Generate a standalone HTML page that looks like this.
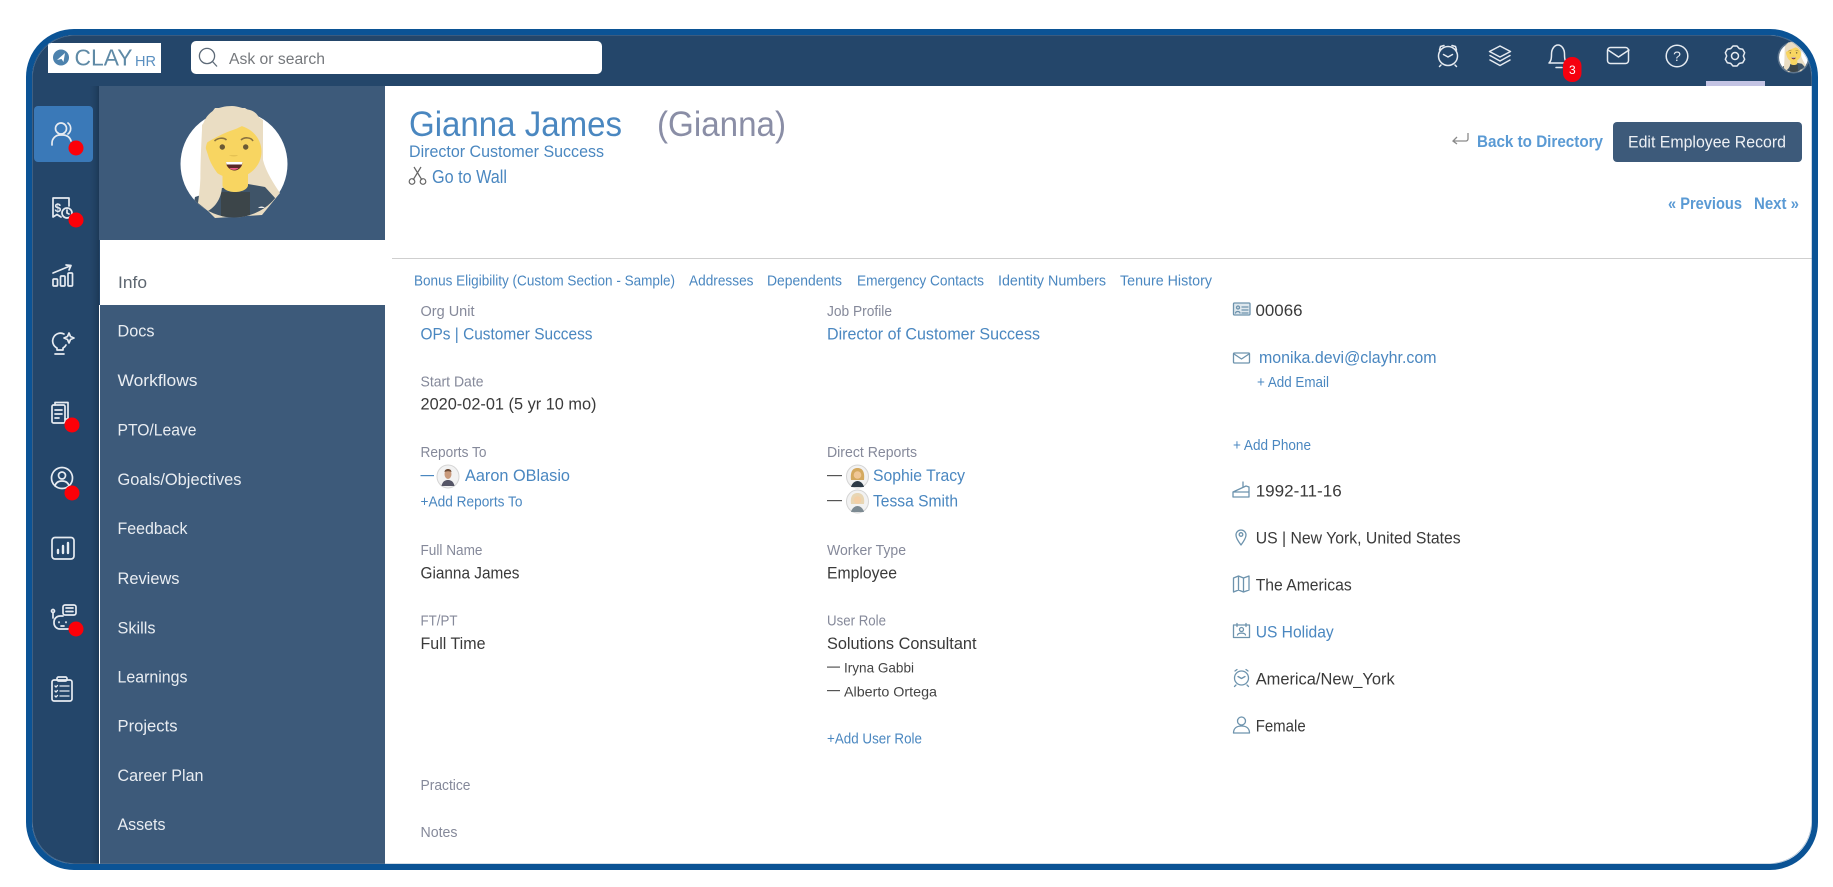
<!DOCTYPE html>
<html><head><meta charset="utf-8"><title>ClayHR</title>
<style>
html,body{margin:0;padding:0;background:#fff;width:1833px;height:887px;overflow:hidden}
svg{display:block}
text{font-family:"Liberation Sans",sans-serif}
.l{fill:#4a87c0}
.t{fill:#3a3a3a;font-size:17px}
.b{fill:#85899a;font-size:15px}
.n{fill:#e9edf2;font-size:16.5px}
.i{fill:none;stroke:#e6ebf1;stroke-width:1.7;stroke-linecap:round;stroke-linejoin:round}
.c{fill:none;stroke:#6d93ad;stroke-width:1.3;stroke-linecap:round;stroke-linejoin:round}
</style></head><body>
<svg width="1833" height="887" viewBox="0 0 1833 887" xmlns="http://www.w3.org/2000/svg" style="filter:blur(.35px)">
<defs>
<clipPath id="cl"><rect x="32" y="35" width="1780" height="829" rx="42"/></clipPath>
<clipPath id="av"><circle cx="234" cy="164" r="53.5"/></clipPath>
<linearGradient id="sh" x1="0" x2="1"><stop offset="0" stop-color="#24466a" stop-opacity="0"/><stop offset="1" stop-color="#1c3856"/></linearGradient>
<g id="ava">
<circle cx="234" cy="164" r="53.5" fill="#fff"/>
<path d="M202 130C204 112 218 106 232 106C238 106 244 109 250 110C258 112 263 122 263 135L263 160C266 172 274 184 280 193L262 215L215 218L202 205C199 190 201 150 202 130Z" fill="#eaddc3"/>
<g clip-path="url(#av)">
<path d="M190 225L195 197L222 188L248 184L265 187L276 199L290 225Z" fill="#3f5468"/>
<path d="M221 192H250V225H221Z" fill="#3c4549"/>
<path d="M258 208c2-2 5-2 7 0z" fill="#e9e9e9"/>
</g>
<path d="M222.500 170H248V185C248 189 242 192 235 192C228 192 222.500 189 222.500 185Z" fill="#f8d561"/>
<ellipse cx="233.500" cy="151.500" rx="28" ry="26.500" fill="#f8d561"/>
<path d="M202 146C210 140 222 134 230 131C236 129 241 127 245 124C252 130 260 138 263 146L263 120L245 108L215 108L202 125Z" fill="#eaddc3"/>
<path d="M203 140L208 155C212 170 222 175 222 185C222 195 218 205 208 211L198 203C201 185 201 160 203 140Z" fill="#eaddc3"/>
<path d="M214.500 141c3-3 9-4 12-1M241 140c3-3 10-3 12 1" fill="none" stroke="#8a7240" stroke-width="1.600"/>
<circle cx="222.300" cy="147" r="2.700" fill="#6b5a35"/><circle cx="245.700" cy="147" r="2.700" fill="#6b5a35"/>
<path d="M229 155h9c-1 2-7 2-9 0z" fill="#e5c253"/>
<path d="M226 162h16.500c0 5-4 8.500-8 8.500s-8.500-3.500-8.500-8.500z" fill="#5a2a26"/>
<path d="M226 162h16.500l-.5 2.500h-15.500z" fill="#fff"/><path d="M229.500 168h9c-2 2.500-7 2.500-9 0z" fill="#ef5e87"/>
</g>
</defs>
<rect width="1833" height="887" fill="#fff"/>
<g clip-path="url(#cl)">
<rect x="32" y="35" width="1780" height="829" fill="#fff"/>
<rect x="32" y="35" width="1780" height="51" fill="#24466a"/>
<rect x="32" y="35" width="68" height="829" fill="#24466a"/>
<rect x="88" y="86" width="11" height="778" fill="url(#sh)"/>
<rect x="99" y="86" width="286" height="154" fill="#3d5a7a"/>
<rect x="99" y="305" width="1" height="559" fill="#fff"/>
<rect x="100" y="305" width="285" height="559" fill="#3d5a7a"/>
<rect x="1706" y="81" width="59" height="5" fill="#c3c3e3"/>
</g>

<!-- logo -->
<rect x="48" y="43" width="113" height="30" fill="#fff"/>
<circle cx="61" cy="57.500" r="8" fill="#4d82ad"/>
<path d="M57 60l8-7-1.500 9-2-3z" fill="#fff"/>
<text x="74.500" y="65.500" font-size="23" fill="#5f8aa6" textLength="58" lengthAdjust="spacingAndGlyphs">CLAY</text>
<text x="135" y="66" font-size="15" fill="#5a8fc0" textLength="21" lengthAdjust="spacingAndGlyphs">HR</text>

<!-- search -->
<rect x="191" y="41" width="411" height="33" rx="5" fill="#fff"/>
<circle cx="207" cy="56" r="7.600" fill="none" stroke="#5d6a78" stroke-width="1.300"/>
<path d="M212.500 61.500l4.500 5" stroke="#5d6a78" stroke-width="1.300" fill="none"/>
<text x="229" y="64" font-size="15.500" fill="#75787c" textLength="96" lengthAdjust="spacingAndGlyphs">Ask or search</text>

<!-- top icons -->
<g class="i" style="stroke-width:1.500">
<circle cx="1448" cy="56" r="9.500"/><path d="M1443.500 54.500l4.500 2.500 4.500-2.500"/><path d="M1439.500 50l1-3.500 3.500-1M1456.500 50l-1-3.500-3.500-1M1441 65l-1.500 1.500M1455 65l1.500 1.500"/>
<path d="M1500 46l10.500 5.500-10.500 5.500-10.500-5.500z"/><path d="M1490 55.500l10 5.500 10-5.500M1490 60l10 5.500 10-5.500"/>
<path d="M1549 63c2-2 2.500-4 2.500-9 0-5 3-9 6.500-9s6.500 4 6.500 9c0 5 .5 7 2.500 9z"/><path d="M1556 67.500h6"/>
<rect x="1607.500" y="47.500" width="21" height="16" rx="3"/><path d="M1608 50l10.500 7 10.500-7"/>
<circle cx="1677" cy="56" r="10.800"/>
<g transform="translate(1735 56)"><path d="M-2-10H2L4.300-7.400 7.660-6.730 9.660-3.270 8.300 0 9.660 3.270 7.660 6.730 4.300 7.400 2 10H-2L-4.300 7.400-7.660 6.730-9.660 3.270-8.300 0-9.660-3.270-7.660-6.730-4.300-7.400z"/><circle r="3.500"/></g>
</g>
<text x="1677" y="61" font-size="14" fill="#e6ebf1" text-anchor="middle">?</text>
<rect x="1563" y="57" width="18.500" height="25" rx="9" fill="#f5000f"/>
<text x="1572.300" y="74" font-size="12" fill="#fff" text-anchor="middle">3</text>

<!-- top avatar -->
<circle cx="1793.500" cy="57.500" r="16" fill="#8c9aa8" opacity=".55"/>
<use href="#ava" transform="translate(1793.500 57.500) scale(.27) translate(-234 -164)"/>

<!-- side icons -->
<rect x="34" y="106" width="59" height="56" rx="4" fill="#3a79b8"/>
<g class="i">
<circle cx="61" cy="128.500" r="5.500"/><path d="M68 123a7 7 0 0 1 0 11"/><path d="M52 145v-2a8 8 0 0 1 8-8h3a8 8 0 0 1 8 6"/>
<path d="M53 198v19l4-2.500 4 2.500M53 198h16v8"/><circle cx="67" cy="213" r="5"/><path d="M67 210v3l2 1"/>
<path d="M53 273l17-7M66 265l5 .5-2 4.500"/><rect x="53" y="279" width="4.500" height="7" rx="1"/><rect x="60.500" y="276" width="4.500" height="10" rx="1"/><rect x="68" y="273" width="4.500" height="13" rx="1"/>
<path d="M64 334a7.500 7.500 0 1 0-7 14v2h6v-2a7 7 0 0 0 3-3M55 354h9"/><path d="M69 333l1.500 3.500L74 338l-3.500 1.500L69 343l-1.500-3.500L64 338l3.500-1.500z"/>
<rect x="52" y="405" width="13" height="18" rx="1.500"/><path d="M55 405v-2.500h13v16.500h-3M55 410h7M55 414h7M55 418h4"/>
<circle cx="62" cy="478" r="10.500"/><circle cx="62" cy="475.500" r="3.500"/><path d="M55 486c1-4 4-5 7-5s6 1 7 5"/>
<rect x="52" y="537.500" width="22" height="21.500" rx="3"/><path d="M58 553v-3M63 553v-7M68 553v-10" style="stroke-width:2.400"/>
<rect x="63" y="605" width="13" height="10" rx="2"/><path d="M66 608h7M66 611.500h7M53 613v5"/><circle cx="53" cy="611" r="1.500"/><path d="M63 616h-3a6 6 0 0 0-6 6v1a6 6 0 0 0 6 6h8a4 4 0 0 0 4-4"/><path d="M59 622v.5M66 622v.5M61 626h3"/>
<rect x="52" y="680" width="20" height="21" rx="2"/><rect x="57" y="677" width="10" height="4" rx="1.500"/><path d="M60 686h9M60 691h9M60 696h9M55 686l1 1 1.500-1.500M55 691l1 1 1.500-1.500M55 696l1 1 1.500-1.500" style="stroke-width:1.300"/>
</g>
<text x="54.500" y="212" font-size="12" font-weight="bold" fill="#e6ebf1">$</text>
<g fill="#fc0008"><circle cx="76" cy="148" r="7.500"/><circle cx="76" cy="220" r="7.500"/><circle cx="72" cy="425" r="7.500"/><circle cx="72" cy="493" r="7.500"/><circle cx="76" cy="629" r="7.500"/></g>

<!-- main avatar -->
<use href="#ava"/>

<!-- header text -->
<text x="409" y="136" font-size="35" class="l" textLength="213" lengthAdjust="spacingAndGlyphs">Gianna James</text>
<text x="657" y="136" font-size="35" fill="#8a8ea6" textLength="129" lengthAdjust="spacingAndGlyphs">(Gianna)</text>
<text x="409" y="157" font-size="17" class="l" textLength="195" lengthAdjust="spacingAndGlyphs">Director Customer Success</text>
<text x="432" y="183" font-size="18" class="l" textLength="75" lengthAdjust="spacingAndGlyphs">Go to Wall</text>
<g fill="none" stroke="#666" stroke-width="1.200"><path d="M414 167l8 13M421 167l-8 13"/><circle cx="412" cy="181.500" r="2.800"/><circle cx="423" cy="181.500" r="2.800"/></g>

<path d="M1468 133v6c0 1-1 2-2 2h-13M1457 137l-4 4 4 3" fill="none" stroke="#8a8a8a" stroke-width="1.300"/>
<text x="1477" y="147" font-size="16.500" font-weight="bold" fill="#5a9ad4" textLength="126" lengthAdjust="spacingAndGlyphs">Back to Directory</text>
<rect x="1613" y="122" width="189" height="40" rx="4" fill="#3d5a7a"/>
<text x="1628" y="147.500" font-size="17" fill="#eef1f5" textLength="158" lengthAdjust="spacingAndGlyphs">Edit Employee Record</text>
<text x="1668" y="209" font-size="16.500" font-weight="bold" fill="#5a9ad4" textLength="74" lengthAdjust="spacingAndGlyphs">« Previous</text>
<text x="1754" y="209" font-size="16.500" font-weight="bold" fill="#5a9ad4" textLength="45" lengthAdjust="spacingAndGlyphs">Next »</text>
<rect x="392" y="258" width="1420" height="1" fill="#cfcfcf"/>

<!-- subnav -->
<text x="118" y="288" font-size="16.500" fill="#5d6670" textLength="29" lengthAdjust="spacingAndGlyphs">Info</text>
<g class="n">
<text x="117.500" y="336.500" textLength="37" lengthAdjust="spacingAndGlyphs">Docs</text>
<text x="117.500" y="386" textLength="80" lengthAdjust="spacingAndGlyphs">Workflows</text>
<text x="117.500" y="435.500" textLength="79" lengthAdjust="spacingAndGlyphs">PTO/Leave</text>
<text x="117.500" y="485" textLength="124" lengthAdjust="spacingAndGlyphs">Goals/Objectives</text>
<text x="117.500" y="534" textLength="70" lengthAdjust="spacingAndGlyphs">Feedback</text>
<text x="117.500" y="584" textLength="62" lengthAdjust="spacingAndGlyphs">Reviews</text>
<text x="117.500" y="633.500" textLength="38" lengthAdjust="spacingAndGlyphs">Skills</text>
<text x="117.500" y="682.500" textLength="70" lengthAdjust="spacingAndGlyphs">Learnings</text>
<text x="117.500" y="731.500" textLength="60" lengthAdjust="spacingAndGlyphs">Projects</text>
<text x="117.500" y="781" textLength="86" lengthAdjust="spacingAndGlyphs">Career Plan</text>
<text x="117.500" y="830" textLength="48" lengthAdjust="spacingAndGlyphs">Assets</text>
</g>

<!-- tabs -->
<g class="l" font-size="15">
<text x="414" y="285.500" textLength="261" lengthAdjust="spacingAndGlyphs">Bonus Eligibility (Custom Section - Sample)</text>
<text x="689" y="285.500" textLength="64.500" lengthAdjust="spacingAndGlyphs">Addresses</text>
<text x="767" y="285.500" textLength="75" lengthAdjust="spacingAndGlyphs">Dependents</text>
<text x="857" y="285.500" textLength="127" lengthAdjust="spacingAndGlyphs">Emergency Contacts</text>
<text x="998" y="285.500" textLength="108" lengthAdjust="spacingAndGlyphs">Identity Numbers</text>
<text x="1120" y="285.500" textLength="92" lengthAdjust="spacingAndGlyphs">Tenure History</text>
</g>

<!-- col 1 -->
<g class="b">
<text x="420.500" y="316.200" textLength="54" lengthAdjust="spacingAndGlyphs">Org Unit</text>
<text x="420.500" y="386.700" textLength="63" lengthAdjust="spacingAndGlyphs">Start Date</text>
<text x="420.500" y="457.200" textLength="66" lengthAdjust="spacingAndGlyphs">Reports To</text>
<text x="420.500" y="555" textLength="62" lengthAdjust="spacingAndGlyphs">Full Name</text>
<text x="420.500" y="625.300" textLength="37" lengthAdjust="spacingAndGlyphs">FT/PT</text>
<text x="420.500" y="790.200" textLength="50" lengthAdjust="spacingAndGlyphs">Practice</text>
<text x="420.500" y="837.200" textLength="37" lengthAdjust="spacingAndGlyphs">Notes</text>
<text x="827" y="316.200" textLength="65" lengthAdjust="spacingAndGlyphs">Job Profile</text>
<text x="827" y="457.200" textLength="90" lengthAdjust="spacingAndGlyphs">Direct Reports</text>
<text x="827" y="555" textLength="79" lengthAdjust="spacingAndGlyphs">Worker Type</text>
<text x="827" y="625.300" textLength="59" lengthAdjust="spacingAndGlyphs">User Role</text>
</g>
<text x="420.500" y="339.500" font-size="17" class="l" textLength="172" lengthAdjust="spacingAndGlyphs">OPs | Customer Success</text>
<text x="827" y="339.500" font-size="17" class="l" textLength="213" lengthAdjust="spacingAndGlyphs">Director of Customer Success</text>
<text x="420.500" y="409.500" class="t" textLength="176" lengthAdjust="spacingAndGlyphs">2020-02-01 (5 yr 10 mo)</text>
<rect x="420.500" y="475" width="13.500" height="1.200" fill="#4a87c0"/>
<text x="465" y="481" font-size="17" class="l" textLength="105" lengthAdjust="spacingAndGlyphs">Aaron OBlasio</text>
<text x="420.500" y="506.500" font-size="14.500" class="l" textLength="102" lengthAdjust="spacingAndGlyphs">+Add Reports To</text>
<rect x="827" y="475" width="15" height="1.200" fill="#555"/>
<text x="873" y="481" font-size="17" class="l" textLength="92" lengthAdjust="spacingAndGlyphs">Sophie Tracy</text>
<rect x="827" y="500" width="15" height="1.200" fill="#555"/>
<text x="873" y="506.500" font-size="17" class="l" textLength="85" lengthAdjust="spacingAndGlyphs">Tessa Smith</text>

<!-- small avatars -->
<g>
<ellipse cx="448" cy="476.500" rx="11" ry="11.500" fill="#f2f2f2" stroke="#d5d5d5"/>
<ellipse cx="448" cy="474" rx="3.500" ry="5" fill="#c99a7c"/><path d="M444.500 472c0-4 7-4 7 0-2-1-5-1-7 0z" fill="#6b4a35"/><path d="M441.500 486c1-5 4-6 6.500-6s5.500 1 6.500 6z" fill="#556"/>
<ellipse cx="857.500" cy="476.500" rx="11" ry="11.500" fill="#f2f2f2" stroke="#d5d5d5"/>
<path d="M851 480c-1-9 2-12 6.500-12s7.500 3 6.500 12z" fill="#d4a95f"/><circle cx="857.500" cy="475" r="3.800" fill="#f0c796"/><path d="M851 487c1-4 4-6 6.500-6s5.500 2 6.500 6z" fill="#2d3a46"/>
<ellipse cx="857.500" cy="501.500" rx="11" ry="11.500" fill="#f2f2f2" stroke="#d5d5d5"/>
<path d="M851 504c-1-8 2-11 6.500-11s7.500 3 6.500 11z" fill="#e8d6b4"/><circle cx="857.500" cy="500" r="3.800" fill="#f3cfa6"/><path d="M851 512c1-4 4-6 6.500-6s5.500 2 6.500 6z" fill="#7c8a92"/>
</g>

<text x="420.500" y="578.500" class="t" textLength="99" lengthAdjust="spacingAndGlyphs">Gianna James</text>
<text x="827" y="578.500" class="t" textLength="70" lengthAdjust="spacingAndGlyphs">Employee</text>
<text x="420.500" y="648.800" class="t" textLength="65" lengthAdjust="spacingAndGlyphs">Full Time</text>
<text x="827" y="648.800" class="t" textLength="149.500" lengthAdjust="spacingAndGlyphs">Solutions Consultant</text>
<rect x="827" y="666.500" width="13" height="1.200" fill="#555"/>
<text x="844" y="672.700" font-size="14" fill="#444" textLength="70" lengthAdjust="spacingAndGlyphs">Iryna Gabbi</text>
<rect x="827" y="690" width="13" height="1.200" fill="#555"/>
<text x="844" y="696.700" font-size="14" fill="#444" textLength="93" lengthAdjust="spacingAndGlyphs">Alberto Ortega</text>
<text x="827" y="743.300" font-size="14.500" class="l" textLength="95" lengthAdjust="spacingAndGlyphs">+Add User Role</text>

<!-- col 3 -->
<text x="1255.500" y="316" class="t" textLength="47" lengthAdjust="spacingAndGlyphs">00066</text>
<text x="1259" y="363" font-size="17" class="l" textLength="177.500" lengthAdjust="spacingAndGlyphs">monika.devi@clayhr.com</text>
<text x="1257" y="387" font-size="14.500" class="l" textLength="72" lengthAdjust="spacingAndGlyphs">+ Add Email</text>
<text x="1233" y="450" font-size="14.500" class="l" textLength="78" lengthAdjust="spacingAndGlyphs">+ Add Phone</text>
<text x="1255.700" y="496.500" class="t" textLength="86" lengthAdjust="spacingAndGlyphs">1992-11-16</text>
<text x="1255.700" y="543.500" class="t" textLength="205" lengthAdjust="spacingAndGlyphs">US | New York, United States</text>
<text x="1255.700" y="590.300" class="t" textLength="96" lengthAdjust="spacingAndGlyphs">The Americas</text>
<text x="1255.700" y="637.500" font-size="17" class="l" textLength="78" lengthAdjust="spacingAndGlyphs">US Holiday</text>
<text x="1255.700" y="684.500" class="t" textLength="139" lengthAdjust="spacingAndGlyphs">America/New_York</text>
<text x="1255.700" y="731.300" class="t" textLength="50" lengthAdjust="spacingAndGlyphs">Female</text>
<g class="c">
<rect x="1233.500" y="303" width="16.500" height="12" rx="1" fill="#dfe8ee"/><circle cx="1238" cy="307.500" r="1.500"/><path d="M1235.500 313c.5-2 4-2 4.500 0M1242 307h6M1242 310h6M1242 313h6"/>
<rect x="1233.500" y="353" width="16" height="10" rx="1"/><path d="M1234 354l7.500 5 7.500-5"/>
<path d="M1233 497h16v-10l-3-1-13 6zM1233 492h16M1243 487v-5"/>
<path d="M1241 545c-3-4-5-7-5-10a5 5 0 0 1 10 0c0 3-2 6-5 10z"/><circle cx="1241" cy="534.500" r="1.800"/>
<path d="M1233.500 578l5-2 5 2 5.500-2v14l-5.500 2-5-2-5 2zM1238.500 576v14M1243.500 578v14"/>
<rect x="1233.500" y="625" width="16" height="12.500"/><circle cx="1241.500" cy="629.500" r="2"/><path d="M1237.500 635c.5-2.500 7.500-2.500 8 0M1237 623.500v3M1246 623.500v3"/>
<circle cx="1241.500" cy="678" r="7"/><path d="M1238 676.500l3.500 2 3.500-2M1235 671l2-1.500M1248 671l-2-1.500M1236 685l-1.500 1.500M1247 685l1.500 1.500"/>
<circle cx="1241.500" cy="721" r="4"/><path d="M1233.500 733c0-5 3.500-7 8-7s8 2 8 7z"/>
</g>

<!-- frame -->
<rect x="29" y="32" width="1786" height="835" rx="45" fill="none" stroke="#0b5395" stroke-width="6"/>
<rect x="32.500" y="35.500" width="1779" height="828" rx="42" fill="none" stroke="#6f90b2" stroke-width=".6" opacity=".6"/>
</svg>
</body></html>
